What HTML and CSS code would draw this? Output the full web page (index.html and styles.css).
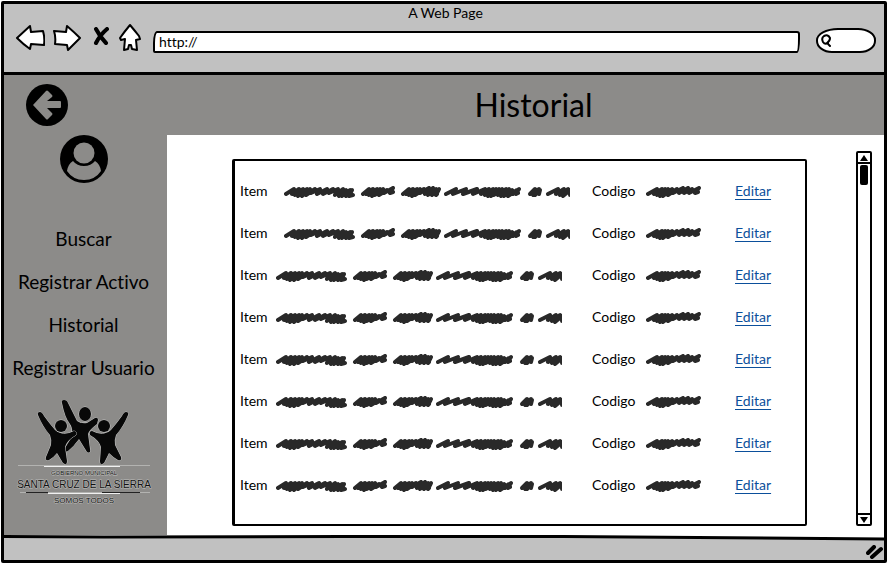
FILE: index.html
```html
<!DOCTYPE html>
<html lang="es">
<head>
<meta charset="utf-8">
<meta name="viewport" content="width=device-width, initial-scale=1">
<title>Historial</title>
<link rel="stylesheet" href="styles.css">
</head>
<body>
<svg class="defs" aria-hidden="true">
  <defs>
    <symbol id="long-scribble" viewBox="0 0 286 12">
      <g fill="none" stroke="#292929" stroke-width="4" stroke-linecap="round" stroke-linejoin="round">
        <path d="M2 8l8-5-2 5 7-5-4 6 8-6-5 7 9-7-5 7 8-7-4 6 9-6-4 4 9-4-3 5 10-5-4 5 10-5-4 4 9-4-3 6 8-6-4 7 7-6-4 6 8-6-4 6 6-6-3 6 4-1"/>
        <path d="M79 8l6-5-3 5 7-5-4 6 8-6-5 7 8-7-5 6 8-6-4 6 8-5-3 3 9-5-3 5 3-1"/>
        <path d="M119 8l6-5-3 5 7-5-4 6 8-6-5 7 8-7-5 6 9-6-4 4 9-5-4 6 8-6-5 7 8-6-4 6 7-6-3 6 1-1"/>
        <path d="M162 8l10-5-3 5 13-5-3 5 14-5-4 5 12-5-4 5 8-5-4 6 8-6-5 7 8-7-5 7 8-7-5 6 8-6-4 6 8-6-5 7 8-7-5 7 8-6-4 6 9-6-4 4 6-5-3 5 2-1"/>
        <path d="M246 8l5-5-2 6 6-6-4 6 5-5-1 4"/>
        <path d="M264 8l10-5-2 5 8-5-4 6 8-6-5 7 7-6v5"/>
      </g>
    </symbol>
    <symbol id="short-scribble" viewBox="0 0 56 12">
      <path fill="none" stroke="#292929" stroke-width="4" stroke-linecap="round" stroke-linejoin="round" d="M2 8l9-5-3 5 8-5-5 6 8-6-5 7 8-7-5 7 9-7-4 6 9-6-4 4 10-5-4 5 9-5-4 5 8-4-3 4 10-5-4 5 3-1"/>
    </symbol>
  </defs>
</svg>

<div class="browser">
  <div class="chrome">
    <div class="window-title">A Web Page</div>
    <div class="toolbar">
      <div class="nav-buttons">
        <button type="button" class="icon-button" aria-label="Atrás">
          <svg width="30" height="28" viewBox="0 0 30 28"><path class="outline" d="M2 14L15 2l1 6 12-1q2 7 1 14l-13-1-1 5Q8 20 2 14z"/></svg>
        </button>
        <button type="button" class="icon-button" aria-label="Adelante">
          <svg width="30" height="28" viewBox="0 0 30 28"><path class="outline" d="M1 7l12 1 1-6q7 6 13 12L15 26l-1-5-12-1q1-7-1-13z"/></svg>
        </button>
        <button type="button" class="icon-button" aria-label="Detener">
          <svg width="18" height="22" viewBox="0 0 18 22"><path d="M5 2q4 8 10 14M16 2Q9 8 5 16" fill="none" stroke="#000" stroke-width="4" stroke-linecap="round"/></svg>
        </button>
        <button type="button" class="icon-button" aria-label="Inicio">
          <svg width="24" height="30" viewBox="0 0 24 30"><path class="outline" d="M13 2Q8 8 3 15l1 2 4-1-1 11 4-1 1-4h2l1 4 5 1-1-10 4-1-1-3Q18 8 13 2z"/></svg>
        </button>
      </div>
      <input class="address" type="text" value="http://" aria-label="Dirección">
      <label class="search">
        <svg width="12" height="14" viewBox="0 0 12 14"><path d="M8 9q-3 2-5-1-2-4 1-6 4-2 6 2 0 3-3 5l3 3" fill="none" stroke="#000" stroke-width="2" stroke-linecap="round"/></svg>
        <input type="text" aria-label="Buscar en la web">
      </label>
    </div>
  </div>

  <header class="page-header">
    <button type="button" class="icon-button back" aria-label="Volver">
      <svg width="42" height="42" viewBox="0 0 42 42"><circle cx="21" cy="21" r="21"/><path fill="#8c8b89" d="M7 21L20 7q1-1 2 0l4 4q1 1 0 2l-5 4h13q1 0 1 1v5q0 1-1 1H21l5 5q1 1 0 2l-4 4q-1 1-2 0z"/></svg>
    </button>
    <h1>Historial</h1>
  </header>

  <div class="body">
    <aside class="sidebar">
      <svg class="avatar" width="48" height="48" viewBox="0 0 48 48" role="img" aria-label="Usuario"><circle cx="24" cy="24" r="24"/><g fill="#8c8b89"><path d="M13 26q4 5 11 5t11-5q5 3 6 10-6 9-17 9T7 36q1-7 6-10z"/><circle cx="24" cy="18" r="12" fill="#000"/><circle cx="24" cy="18" r="10.500"/></g></svg>
      <nav>
        <a href="#">Buscar</a>
        <a href="#">Registrar Activo</a>
        <a href="#">Historial</a>
        <a href="#">Registrar Usuario</a>
      </nav>
      <svg class="logo" width="136" height="106" viewBox="0 0 136 106" role="img" aria-label="Gobierno Municipal Santa Cruz de la Sierra">
        <g fill="#080808" stroke="#c9c9c8" stroke-width="1" paint-order="stroke">
          <path d="M46 3q-1-3 2-3t4 3l9 18q4 3 10 2l8-5q3-1 3 2l-1 4q-8 6-9 10l2 15q1 5-3 3l-8-13q-5 7-11 12-4 2-3-3 5-7 7-13 1-7-2-11-5-6-8-21z"/>
          <ellipse cx="69" cy="14" rx="6" ry="7"/>
          <path d="M22 15q-1-3 2-3 2 0 4 4 5 7 11 14 8 7 19 1 3 0 2 4-9 5-11 12l2 14q0 5-4 2l-6-10q-4 5-8 7-4 1-3-3l5-12q1-5-1-10-7-8-12-20z"/>
          <ellipse cx="45" cy="26" rx="6" ry="6"/>
          <path d="M112 15q1-3-2-3-2 0-4 4-5 7-11 14-8 7-19 1-3 0-2 4 9 5 11 12l-1 14q0 5 4 2l5-10q5 5 9 7 4 1 3-3l-6-12q-1-5 1-10 7-8 12-20z"/>
          <ellipse cx="88" cy="26" rx="6" ry="6"/>
        </g>
        <path d="M2 65.500h132M4 92.500h130" stroke="#b3b3b1"/>
        <path d="M28 66.500h76M32 93.500h72" stroke="#f1f1f1"/>
        <path d="M86 92.500h38M10 92.500h22" stroke="#222"/>
        <g class="logo-text" text-anchor="middle">
          <text x="68" y="75" font-size="6">GOBIERNO MUNICIPAL</text>
          <text x="68" y="88" font-size="10">SANTA CRUZ DE LA SIERRA</text>
          <text x="68" y="103" font-size="8">SOMOS TODOS</text>
        </g>
      </svg>
    </aside>

    <main>
      <section class="card">
        <table>
          <tbody>
            <tr class="indented"><td class="item">Item</td><td class="description"><svg width="286" height="12"><use href="#long-scribble"/></svg></td><td class="code">Codigo</td><td class="value"><svg width="56" height="12"><use href="#short-scribble"/></svg></td><td><a href="#">Editar</a></td></tr>
            <tr class="indented"><td class="item">Item</td><td class="description"><svg width="286" height="12"><use href="#long-scribble"/></svg></td><td class="code">Codigo</td><td class="value"><svg width="56" height="12"><use href="#short-scribble"/></svg></td><td><a href="#">Editar</a></td></tr>
            <tr><td class="item">Item</td><td class="description"><svg width="286" height="12"><use href="#long-scribble"/></svg></td><td class="code">Codigo</td><td class="value"><svg width="56" height="12"><use href="#short-scribble"/></svg></td><td><a href="#">Editar</a></td></tr>
            <tr><td class="item">Item</td><td class="description"><svg width="286" height="12"><use href="#long-scribble"/></svg></td><td class="code">Codigo</td><td class="value"><svg width="56" height="12"><use href="#short-scribble"/></svg></td><td><a href="#">Editar</a></td></tr>
            <tr><td class="item">Item</td><td class="description"><svg width="286" height="12"><use href="#long-scribble"/></svg></td><td class="code">Codigo</td><td class="value"><svg width="56" height="12"><use href="#short-scribble"/></svg></td><td><a href="#">Editar</a></td></tr>
            <tr><td class="item">Item</td><td class="description"><svg width="286" height="12"><use href="#long-scribble"/></svg></td><td class="code">Codigo</td><td class="value"><svg width="56" height="12"><use href="#short-scribble"/></svg></td><td><a href="#">Editar</a></td></tr>
            <tr><td class="item">Item</td><td class="description"><svg width="286" height="12"><use href="#long-scribble"/></svg></td><td class="code">Codigo</td><td class="value"><svg width="56" height="12"><use href="#short-scribble"/></svg></td><td><a href="#">Editar</a></td></tr>
            <tr><td class="item">Item</td><td class="description"><svg width="286" height="12"><use href="#long-scribble"/></svg></td><td class="code">Codigo</td><td class="value"><svg width="56" height="12"><use href="#short-scribble"/></svg></td><td><a href="#">Editar</a></td></tr>
          </tbody>
        </table>
      </section>
      <div class="scrollbar">
        <button type="button" aria-label="Subir"><svg width="8" height="6" viewBox="0 0 8 6"><path d="M4 0l4 6H0z"/></svg></button>
        <div class="track"><div class="thumb"></div></div>
        <button type="button" aria-label="Bajar"><svg width="8" height="6" viewBox="0 0 8 6"><path d="M0 0h8L4 6z"/></svg></button>
      </div>
    </main>
  </div>

  <footer>
    <svg class="edge" viewBox="0 0 880 6" preserveAspectRatio="none" aria-hidden="true"><path fill="#c1c1c1" d="M0 2L560 1 880 4v2H0z"/><path fill="none" stroke="#000" stroke-width="3" d="M0 1.500L100 2 340 1.500 560 1.500 880 4"/></svg>
    <div class="status">
      <svg width="18" height="14" viewBox="0 0 18 14" aria-hidden="true"><path d="M2 8l6-6M6 12l9-8" fill="none" stroke="#000" stroke-width="4" stroke-linecap="round"/></svg>
    </div>
  </footer>
</div>
</body>
</html>
```
FILE: styles.css
```css
* { box-sizing: border-box; }

body {
  margin: 0;
  background: #fff;
  color: #000;
  font-family: Lato, "Open Sans", sans-serif;
  font-size: 14px;
  font-variant-ligatures: none;
  line-height: 16px;
}

svg { display: block; }

.defs {
  position: absolute;
  width: 0;
  height: 0;
}

.browser {
  display: flex;
  flex-direction: column;
  min-height: calc(100vh - 2px);
  margin: 1px;
  border: 3px solid #000;
  border-radius: 2px;
}

.chrome {
  padding: 1px 8px 19px 11px;
  border-bottom: 3px solid #000;
  background: #c1c1c1;
}

.window-title { text-align: center; }

.toolbar {
  display: flex;
  align-items: center;
  gap: 12px;
  padding-top: 1px;
}

.nav-buttons {
  display: flex;
  align-items: center;
  gap: 8px;
}

.icon-button {
  padding: 0;
  border: 0;
  background: none;
}

.outline {
  fill: #fff;
  stroke: #000;
  stroke-width: 2;
  stroke-linejoin: round;
}

input {
  min-width: 0;
  font: inherit;
  color: inherit;
}

.address {
  flex: 1;
  height: 22px;
  margin-top: 8px;
  padding: 0 4px;
  border: 2px solid #000;
  border-radius: 4px 3px 3px 2px / 12px 3px 14px 2px;
  background: #fff;
}

.search {
  display: flex;
  align-items: center;
  width: 60px;
  height: 25px;
  margin: 6px 0 0 4px;
  padding-left: 2px;
  border: 2px solid #000;
  border-radius: 22px 18px 16px 16px / 12px;
  background: #fff;
}

.search input {
  flex: 1;
  border: 0;
  background: none;
  outline: 0;
}

.page-header {
  display: grid;
  grid-template-columns: 163px 1fr;
  align-items: center;
  height: 60px;
  background: #8c8b89;
}

.back { margin-left: 22px; justify-self: start; }

h1 {
  margin: 0;
  padding-left: 16px;
  font-size: 32px;
  font-weight: 400;
  line-height: 36px;
  text-align: center;
}

.body {
  display: grid;
  flex: 1;
  grid-template-columns: 163px 1fr;
}

.sidebar {
  display: flex;
  flex-direction: column;
  align-items: center;
  padding-right: 4px;
  background: #8c8b89;
}

nav {
  display: flex;
  flex-direction: column;
  align-items: center;
  padding: 34px 0 11px;
}

nav a {
  color: #000;
  font-size: 19px;
  line-height: 43px;
  text-decoration: none;
  white-space: nowrap;
}

.logo-text {
  fill: #111;
  stroke: #bcbcba;
  stroke-width: 1px;
  paint-order: stroke;
  font-family: "Liberation Sans", sans-serif;
}

main {
  display: flex;
  gap: 49px;
  padding: 16px 12px 9px 65px;
}

.card {
  flex: 1;
  margin-top: 8px;
  padding: 9px 4px 16px 5px;
  border: 2px solid #000;
  border-left-width: 3px;
  border-radius: 2px;
}

table {
  width: 100%;
  border-collapse: collapse;
  table-layout: fixed;
}

td {
  height: 42px;
  padding: 0;
}

td svg { margin-top: 2px; }

.item { width: 36px; }
.description { width: 316px; }
.code { width: 54px; }
.value { width: 89px; }
.indented .description { padding-left: 8px; }

td a {
  color: #0b4f9b;
  text-underline-offset: 3px;
}

.scrollbar {
  display: flex;
  flex-direction: column;
  width: 16px;
  border: 2px solid #000;
  border-radius: 2px;
}

.scrollbar button {
  display: flex;
  align-items: center;
  justify-content: center;
  height: 9px;
  padding: 0;
  border: 0;
  background: #fff;
}

.track {
  flex: 1;
  padding: 1px 2px;
  border: solid #000;
  border-width: 2px 0;
}

.thumb {
  height: 20px;
  border-radius: 2px;
  background: #000;
}

footer { background: #fff; }

.edge {
  width: 100%;
  height: 6px;
}

.status {
  display: flex;
  justify-content: flex-end;
  padding: 4px 0 1px;
  background: #c1c1c1;
}
```
